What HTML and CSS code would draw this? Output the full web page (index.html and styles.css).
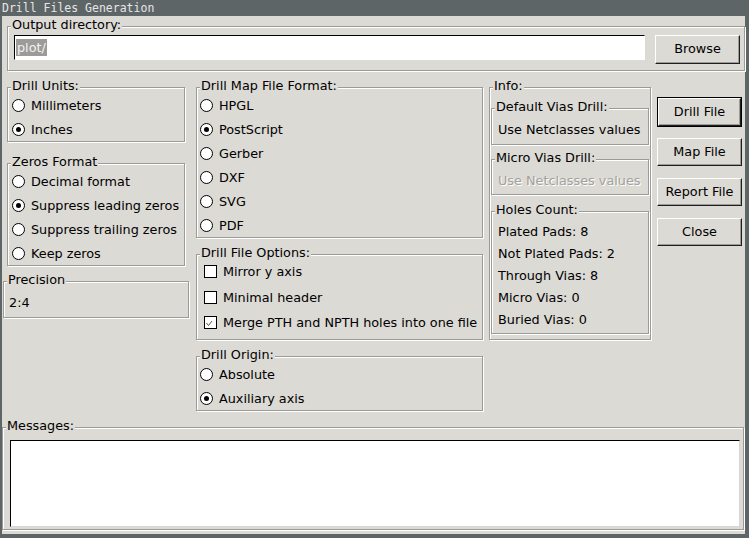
FILE: index.html
```html
<!DOCTYPE html>
<html>
<head>
<meta charset="utf-8">
<title>Drill Files Generation</title>
<link rel="stylesheet" href="styles.css">
</head>
<body>
<div class="window">
  <div class="titlebar">Drill Files Generation</div>
  <div class="client">
    <div class="group outdir">
      <div class="legend">Output directory:</div>
      <div class="dir-row">
        <div class="textinput"><span class="sel">plot/</span></div>
        <div class="btn browse">Browse</div>
      </div>
    </div>

    <div class="main">
      <div class="col col1">
        <div class="group units">
          <div class="legend">Drill Units:</div>
          <div class="opt"><span class="radio"></span>Millimeters</div>
          <div class="opt"><span class="radio on"></span>Inches</div>
        </div>
        <div class="group zeros">
          <div class="legend">Zeros Format</div>
          <div class="opt"><span class="radio"></span>Decimal format</div>
          <div class="opt"><span class="radio on"></span>Suppress leading zeros</div>
          <div class="opt"><span class="radio"></span>Suppress trailing zeros</div>
          <div class="opt"><span class="radio"></span>Keep zeros</div>
        </div>
        <div class="group precision">
          <div class="legend">Precision</div>
          <div class="prec-value">2:4</div>
        </div>
      </div>

      <div class="col col2">
        <div class="group mapfmt">
          <div class="legend">Drill Map File Format:</div>
          <div class="opt"><span class="radio"></span>HPGL</div>
          <div class="opt"><span class="radio on"></span>PostScript</div>
          <div class="opt"><span class="radio"></span>Gerber</div>
          <div class="opt"><span class="radio"></span>DXF</div>
          <div class="opt"><span class="radio"></span>SVG</div>
          <div class="opt"><span class="radio"></span>PDF</div>
        </div>
        <div class="group options">
          <div class="legend">Drill File Options:</div>
          <div class="checks">
            <div class="chk-row"><span class="check"></span>Mirror y axis</div>
            <div class="chk-row"><span class="check"></span>Minimal header</div>
            <div class="chk-row"><span class="check"><svg width="11" height="11" viewBox="0 0 11 11"><polyline points="1.5,6 3.5,8.5 7,4" fill="none" stroke="#555" stroke-width="1"/></svg></span>Merge PTH and NPTH holes into one file</div>
          </div>
        </div>
        <div class="group origin">
          <div class="legend">Drill Origin:</div>
          <div class="opt"><span class="radio"></span>Absolute</div>
          <div class="opt"><span class="radio on"></span>Auxiliary axis</div>
        </div>
      </div>

      <div class="col col3">
        <div class="group info">
          <div class="legend">Info:</div>
          <div class="group sub vias">
            <div class="legend">Default Vias Drill:</div>
            <div class="info-value">Use Netclasses values</div>
          </div>
          <div class="group sub micro">
            <div class="legend">Micro Vias Drill:</div>
            <div class="info-value disabled">Use Netclasses values</div>
          </div>
          <div class="group sub holes">
            <div class="legend">Holes Count:</div>
            <div class="holes-list">
              <div class="hole-row">Plated Pads: 8</div>
              <div class="hole-row">Not Plated Pads: 2</div>
              <div class="hole-row">Through Vias: 8</div>
              <div class="hole-row">Micro Vias: 0</div>
              <div class="hole-row">Buried Vias: 0</div>
            </div>
          </div>
        </div>
      </div>

      <div class="col col4">
        <div class="default-frame"><div class="btn">Drill File</div></div>
        <div class="btn map">Map File</div>
        <div class="btn report">Report File</div>
        <div class="btn close">Close</div>
      </div>
    </div>

    <div class="group messages">
      <div class="legend">Messages:</div>
      <div class="textarea"></div>
    </div>
  </div>
</div>
</body>
</html>
```

FILE: styles.css
```css
* { box-sizing: border-box; }

body {
  margin: 0;
  background: #5e6567;
  font-family: "DejaVu Sans", "Noto Sans", sans-serif;
  font-size: 12.8px;
  color: #000;
}

.window {
  width: 749px;
  height: 538px;
  display: flex;
  flex-direction: column;
  padding: 0 4px 4px 2px;
}

.titlebar {
  height: 16px;
  line-height: 16px;
  margin-left: -2px;
  padding-left: 2px;
  font-family: "DejaVu Sans Mono", monospace;
  font-size: 11.5px;
  color: #e6e6e6;
  white-space: nowrap;
}

.client {
  flex: 1;
  background: #dcdad5;
  display: flex;
  flex-direction: column;
}

/* etched group frame */
.group {
  border: 1px solid #9d9b97;
  box-shadow: inset 1px 1px 0 #fff, 1px 1px 0 #fff;
}

.legend {
  display: table;
  margin: -10px 0 0 3px;
  padding: 0 1px;
  line-height: 15px;
  background: #dcdad5;
  white-space: nowrap;
}

/* output directory */
.outdir {
  margin: 10px 0 0 5px;
  width: 738px;
  padding: 0 4px 6px 0;
}

.dir-row {
  display: flex;
  align-items: flex-start;
  margin: 3px 0 0 6px;
  gap: 10px;
}

.textinput {
  width: 631px;
  height: 25px;
  background: #fff;
  border: 1px solid;
  border-color: #000 #fff #fff #000;
  display: flex;
  align-items: center;
  padding-left: 1px;
}

.sel {
  background: #9c9b98;
  color: #f2f2f2;
  line-height: 17px;
  padding: 0 1px;
}

.btn {
  display: flex;
  align-items: center;
  justify-content: center;
  height: 28px;
  width: 85px;
  background: #dcdad5;
  border: 1px solid;
  border-color: #fff #1f1f1f #1f1f1f #fff;
  box-shadow: inset -1px -1px 0 #9d9b97;
  padding-bottom: 2px;
  white-space: nowrap;
}

.browse { height: 29px; }

/* main area */
.main {
  display: flex;
  align-items: flex-start;
  margin-top: 16px;
  height: 324px;
}

.col { display: flex; flex-direction: column; }

.col1 { margin-left: 1px; width: 186px; }
.col2 { margin-left: 7px; width: 287px; }
.col3 { margin-left: 6px; width: 162px; }
.col4 { margin-left: 6px; width: 85px; margin-top: 10px; }

.units, .zeros { margin-left: 4px; width: 178px; }
.zeros { margin-top: 21px; }
.precision { margin-top: 15px; width: 186px; }

.opt {
  display: flex;
  align-items: center;
  gap: 6px;
  height: 24px;
  padding-left: 4px;
  white-space: nowrap;
}

.col2 .opt { padding-left: 3px; }

.radio {
  position: relative;
  flex: none;
  width: 13px;
  height: 13px;
  border: 1px solid #000;
  border-radius: 50%;
  background: #fff;
}

.radio.on::after {
  content: "";
  position: absolute;
  left: 3px;
  top: 3px;
  width: 5px;
  height: 5px;
  border-radius: 50%;
  background: #000;
}

.prec-value {
  height: 30px;
  display: flex;
  align-items: center;
  padding-left: 5px;
}

.options { margin-top: 16px; padding-bottom: 3.5px; }
.origin { margin-top: 16px; }

.checks { margin-top: -1px; }

.chk-row {
  display: flex;
  align-items: center;
  gap: 6px;
  height: 25.5px;
  padding-left: 7px;
  white-space: nowrap;
}

.check {
  flex: none;
  width: 13px;
  height: 13px;
  border: 1px solid #000;
  background: #fff;
  display: flex;
}

.check svg { display: block; }

/* info */
.info { width: 162px; padding-bottom: 5px; }

.sub { margin-left: 1px; width: 158px; }
.vias { margin-top: 15px; }
.micro { margin-top: 14px; }
.holes { margin-top: 16px; padding-bottom: 3px; }

.info-value {
  height: 30px;
  display: flex;
  align-items: center;
  padding-left: 6px;
  white-space: nowrap;
}

.micro .info-value { height: 29px; padding-top: 1px; }

.disabled {
  color: #a3a19c;
  text-shadow: 1px 1px 0 #fff;
}

.holes-list { padding-top: 3px; }

.hole-row {
  height: 22px;
  display: flex;
  align-items: center;
  padding-left: 6px;
  white-space: nowrap;
}

/* buttons */
.default-frame {
  border: 1px solid #000;
  width: 85px;
}

.default-frame .btn { width: 83px; }

.map { margin-top: 11px; }
.report, .close { margin-top: 12px; }

/* messages */
.messages {
  margin-top: 16px;
  width: 742px;
  height: 103px;
  padding: 0 3px 2px 0;
}

.textarea {
  margin: 7px 0 0 7px;
  width: 730px;
  height: 87px;
  background: #fff;
  border: 1px solid;
  border-color: #000 #d8d6d2 #d8d6d2 #000;
}
```
